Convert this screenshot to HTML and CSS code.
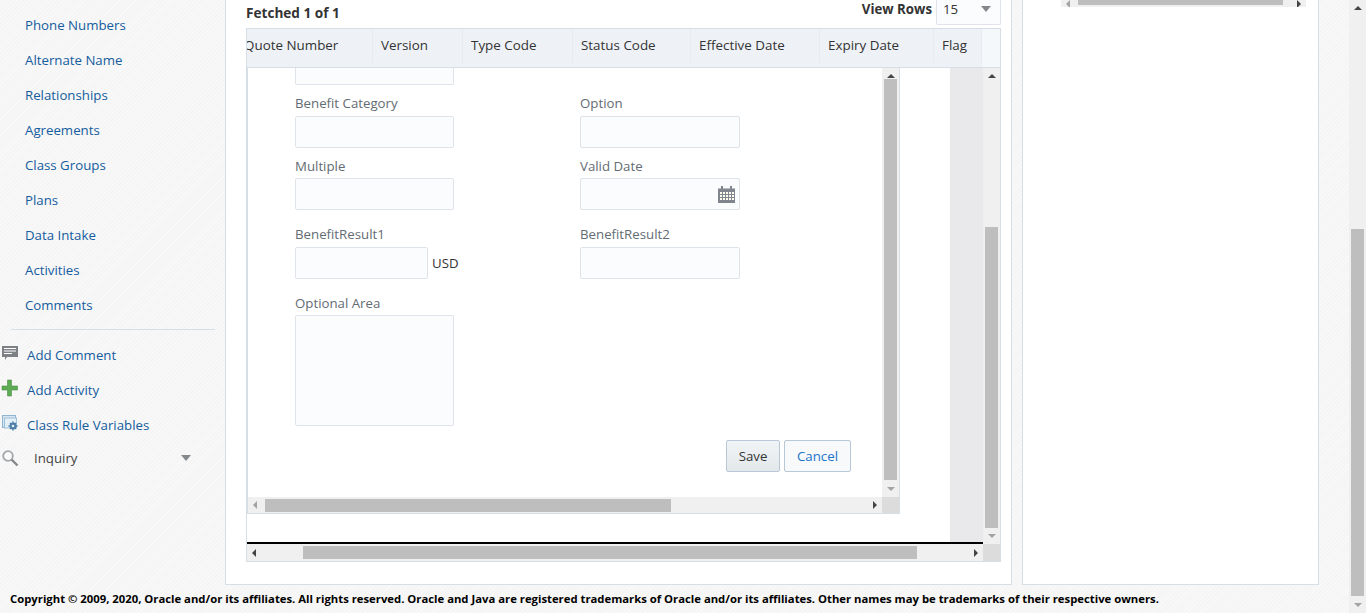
FILE: index.html
```html
<!DOCTYPE html>
<html lang="en">
<head>
    <meta charset="UTF-8">
    <title>Quote Plan</title>
    <link rel="stylesheet" href="styles.css">
</head>
<body>
<div class="page">
    <div class="columns">
        <nav class="sidebar">
            <a class="nav-link" href="#">Phone Numbers</a>
            <a class="nav-link" href="#">Alternate Name</a>
            <a class="nav-link" href="#">Relationships</a>
            <a class="nav-link" href="#">Agreements</a>
            <a class="nav-link" href="#">Class Groups</a>
            <a class="nav-link" href="#">Plans</a>
            <a class="nav-link" href="#">Data Intake</a>
            <a class="nav-link" href="#">Activities</a>
            <a class="nav-link" href="#">Comments</a>
            <div class="nav-rule"></div>
            <a class="nav-action" href="#">
                <svg class="nav-icon" width="18" height="18" viewBox="0 0 18 18"><path d="M1 2h16v11H6l-2 3v-3H1z" fill="#7d8186"/><path d="M3 4.500h12M3 7h12M3 9.500h8" stroke="#fff" stroke-width="1"/></svg>
                Add Comment
            </a>
            <a class="nav-action" href="#">
                <svg class="nav-icon" width="18" height="18" viewBox="0 0 18 18"><path d="M6.500 1h4v6h6v4h-6v6h-4v-6H1V7h5.500z" fill="#5dab55" stroke="#4a8f45" stroke-width=".6"/></svg>
                Add Activity
            </a>
            <a class="nav-action" href="#">
                <svg class="nav-icon" width="18" height="18" viewBox="0 0 18 18"><rect x="1.500" y="1.500" width="13" height="12" fill="#d5e6f1" stroke="#8fb4d0"/><rect x="3.500" y="4" width="12" height="10" fill="#e3eff7" stroke="#9dc0d9"/><path d="M12 7.500v9M7.500 12h9M9 9l6 6M15 9l-6 6" stroke="#4f7fa8" stroke-width="1.400"/><circle cx="12" cy="12" r="3.400" fill="#4f7fa8"/><circle cx="12" cy="12" r="1.300" fill="#e3eff7"/></svg>
                Class Rule Variables
            </a>
            <div class="nav-search">
                <svg class="nav-icon" width="18" height="18" viewBox="0 0 18 18"><circle cx="7" cy="7" r="4.800" fill="#fbfbfb" stroke="#a3a6a9" stroke-width="1.800"/><path d="M10.500 10.500l6 6" stroke="#85888b" stroke-width="2.400"/></svg>
                <span class="nav-search-text">Inquiry</span>
                <span class="caret-down caret-large"></span>
            </div>
        </nav>

        <main class="main-panel">
            <div class="table-bar">
                <strong class="fetched">Fetched 1 of 1</strong>
                <div class="view-rows">
                    <strong>View Rows</strong>
                    <div class="rows-select">15 <span class="caret-down caret-large"></span></div>
                </div>
            </div>
            <div class="table">
                <div class="table-head">
                    <div class="col col-quote">Quote Number</div>
                    <div class="col col-version">Version</div>
                    <div class="col col-type">Type Code</div>
                    <div class="col col-status">Status Code</div>
                    <div class="col col-effective">Effective Date</div>
                    <div class="col col-expiry">Expiry Date</div>
                    <div class="col col-flag">Flag</div>
                    <div class="col-end"></div>
                </div>
                <div class="table-body">
                    <div class="table-view">
                        <div class="frame">
                            <div class="frame-view">
                                <form class="plan-form">
                                    <div class="input input-clipped"></div>
                                    <div class="form-row row-first">
                                        <div class="field">
                                            <label>Benefit Category</label>
                                            <input class="input" type="text">
                                        </div>
                                        <div class="field field-right">
                                            <label>Option</label>
                                            <input class="input" type="text">
                                        </div>
                                    </div>
                                    <div class="form-row row-second">
                                        <div class="field">
                                            <label>Multiple</label>
                                            <input class="input" type="text">
                                        </div>
                                        <div class="field field-right">
                                            <label>Valid Date</label>
                                            <div class="input date-input">
                                                <svg width="17" height="17" viewBox="0 0 17 17"><path d="M0 2.500h17V17H0z" fill="#7f868e"/><path d="M3 0h2v3H3zM12 0h2v3h-2z" fill="#7f868e"/><path d="M2 6h2v2H2zM5 6h2v2H5zM8 6h2v2H8zM11 6h2v2h-2zM14 6h2v2h-2zM2 9h2v2H2zM5 9h2v2H5zM8 9h2v2H8zM11 9h2v2h-2zM14 9h2v2h-2zM2 12h2v2H2zM5 12h2v2H5zM8 12h2v2H8zM11 12h2v2h-2zM14 12h2v2h-2z" fill="#fdfaf0"/></svg>
                                            </div>
                                        </div>
                                    </div>
                                    <div class="form-row row-third">
                                        <div class="field">
                                            <label>BenefitResult1</label>
                                            <div class="with-unit">
                                                <input class="input input-short" type="text">
                                                <span class="unit">USD</span>
                                            </div>
                                        </div>
                                        <div class="field field-right">
                                            <label>BenefitResult2</label>
                                            <input class="input" type="text">
                                        </div>
                                    </div>
                                    <div class="form-row row-fourth">
                                        <div class="field">
                                            <label>Optional Area</label>
                                            <textarea class="input area"></textarea>
                                        </div>
                                    </div>
                                    <div class="form-buttons">
                                        <button class="btn btn-save" type="button">Save</button>
                                        <button class="btn btn-cancel" type="button">Cancel</button>
                                    </div>
                                </form>
                            </div>
                            <div class="vbar frame-vbar">
                                <span class="arrow-up"></span>
                                <div class="vthumb"></div>
                                <span class="arrow-down"></span>
                            </div>
                            <div class="hbar frame-hbar">
                                <span class="arrow-left arrow-light"></span>
                                <div class="hthumb"></div>
                                <span class="arrow-right"></span>
                            </div>
                            <div class="corner"></div>
                        </div>
                        <div class="strip"></div>
                    </div>
                    <div class="vbar table-vbar">
                        <span class="arrow-up"></span>
                        <div class="vthumb"></div>
                        <span class="arrow-down"></span>
                    </div>
                    <div class="hbar table-hbar">
                        <span class="arrow-left"></span>
                        <div class="hthumb"></div>
                        <span class="arrow-right"></span>
                    </div>
                    <div class="corner"></div>
                </div>
            </div>
        </main>

        <aside class="side-panel">
            <div class="hbar side-hbar">
                <span class="arrow-left arrow-light"></span>
                <div class="hthumb"></div>
                <span class="arrow-right"></span>
            </div>
        </aside>

        <div class="vbar page-vbar">
            <span class="arrow-up"></span>
            <div class="vthumb"></div>
            <span class="arrow-down"></span>
        </div>
    </div>
    <footer class="copyright">Copyright © 2009, 2020, Oracle and/or its affiliates. All rights reserved. Oracle and Java are registered trademarks of Oracle and/or its affiliates. Other names may be trademarks of their respective owners.</footer>
</div>
</body>
</html>
```

FILE: styles.css
```css
* {
    box-sizing: border-box;
}
html, body {
    margin: 0;
    height: 613px;
    overflow: hidden;
}
body {
    font-family: "Open Sans", "Noto Sans", sans-serif;
    font-size: 13.25px;
    color: #333;
    background: repeating-linear-gradient(135deg, #f9f9f9 0 1px, #f5f5f5 1px 3px);
}
.page {
    position: relative;
    height: 613px;
}
.columns {
    display: flex;
    height: 613px;
}

/* left nav */
.sidebar {
    width: 225px;
    flex: none;
    padding-top: 8px;
}
.nav-link {
    display: block;
    height: 35px;
    line-height: 35px;
    padding-left: 25px;
    color: #145c9e;
    text-decoration: none;
}
.nav-rule {
    height: 1px;
    margin: 6px 10px 7px 11px;
    background: #d6dfe6;
}
.nav-action {
    display: flex;
    align-items: center;
    height: 35px;
    color: #145c9e;
    text-decoration: none;
    padding-left: 1px;
}
.nav-icon {
    margin-right: 8px;
    margin-top: -4px;
}
.nav-search {
    display: flex;
    align-items: center;
    height: 31px;
    padding-left: 1px;
    color: #444;
}
.nav-search .nav-icon {
    margin-top: 0;
    margin-right: 15px;
}
.nav-search-text {
    width: 147px;
}

/* carets and arrows */
.caret-down {
    display: inline-block;
    width: 0;
    height: 0;
    border-left: 4px solid transparent;
    border-right: 4px solid transparent;
    border-top: 5px solid #85888b;
}
.caret-large {
    border-left-width: 5px;
    border-right-width: 5px;
    border-top-width: 6px;
}
.arrow-up, .arrow-down, .arrow-left, .arrow-right {
    display: block;
    flex: none;
    width: 0;
    height: 0;
    border-style: solid;
    border-color: transparent;
}
.arrow-up {
    margin: 6px auto 1px;
    border-width: 0 4px 4px;
    border-bottom-color: #444;
}
.arrow-down {
    margin: 7px auto 6px;
    border-width: 4px 4px 0;
    border-top-color: #a3a3a3;
}
.arrow-left {
    margin: 0 8px 0 5px;
    border-width: 4px 4px 4px 0;
    border-right-color: #444;
}
.arrow-left.arrow-light {
    border-right-color: #a3a3a3;
}
.arrow-right {
    margin-left: auto;
    margin-right: 5px;
    border-width: 4px 0 4px 4px;
    border-left-color: #444;
}

/* scrollbars */
.vbar {
    display: flex;
    flex-direction: column;
    background: #f0f0f0;
}
.vthumb {
    flex: 1;
    width: 13px;
    margin: 0 auto;
    background: #bebebe;
}
.hbar {
    display: flex;
    align-items: center;
    background: #f0f0f0;
}
.hthumb {
    height: 13px;
    background: #bebebe;
}
.corner {
    background: #dcdcdc;
}

/* main panel */
.main-panel {
    width: 787px;
    height: 585px;
    flex: none;
    padding: 0 10px 0 21px;
    background: #fff;
    border-left: 1px solid #d6dfe6;
    border-right: 1px solid #d6dfe6;
    border-bottom: 1px solid #d6dfe6;
}
.table-bar {
    display: flex;
    justify-content: space-between;
    height: 28px;
    margin-left: -1px;
}
.fetched {
    line-height: 25px;
    font-size: 13.6px;
}
.view-rows {
    display: flex;
    align-items: flex-start;
    gap: 4px;
    line-height: 18px;
}
.rows-select {
    display: flex;
    justify-content: space-between;
    align-items: center;
    width: 65px;
    height: 25px;
    padding: 0 9px 7px 6px;
    background: #fbfcfe;
    border: 1px solid #dfe4ea;
    border-top: 0;
    border-radius: 0 0 2px 2px;
}
.table {
    width: 755px;
    height: 534px;
    margin-left: -1px;
    border: 1px solid #d6dfe6;
}
.table-head {
    display: flex;
    height: 39px;
    overflow: hidden;
    background: #eef2f7;
    border-bottom: 1px solid #d6dfe6;
}
.col {
    flex: none;
    height: 34px;
    padding-left: 8px;
    border-right: 1px solid #e6ebf0;
    white-space: nowrap;
    overflow: hidden;
    font-size: 13.4px;
    line-height: 33px;
}
.col-quote { width: 126px; padding-left: 0; text-indent: -3px; }
.col-version { width: 90px; }
.col-type { width: 110px; }
.col-status { width: 118px; }
.col-effective { width: 129px; }
.col-expiry { width: 114px; }
.col-flag { width: 48px; }
.col-end {
    flex: 1;
    background: #f5f8fb;
}
.table-body {
    display: grid;
    grid-template-columns: 736px 17px;
    grid-template-rows: 476px 17px;
}
.table-view {
    display: flex;
    align-items: flex-start;
    border-bottom: 2px solid #000;
}
.frame {
    display: grid;
    grid-template-columns: 634px 17px;
    grid-template-rows: 429px 16px;
    width: 653px;
    height: 446px;
    flex: none;
    border-left: 1px solid #d6dfe6;
    border-right: 1px solid #d6dfe6;
    border-bottom: 1px solid #d6dfe6;
}
.strip {
    width: 33px;
    height: 100%;
    margin-left: 50px;
    flex: none;
    background: #e9e9eb;
}
.frame-view {
    overflow: hidden;
    background: #fff;
}
.frame-hbar .hthumb {
    width: 406px;
}
.table-vbar .arrow-up {
    margin-bottom: 0;
}
.table-vbar .vthumb {
    flex: none;
    height: 301px;
    margin-top: 149px;
}
.table-vbar .arrow-down {
    margin-top: 6px;
}
.table-hbar .hthumb {
    width: 614px;
    margin-left: 39px;
}

/* form */
.plan-form {
    padding-left: 47px;
}
.input {
    display: block;
    width: 159px;
    height: 32px;
    padding: 0;
    background: #fbfcfe;
    border: 1px solid #dfe4ea;
    border-radius: 2px;
    font-family: inherit;
}
.input-clipped {
    height: 17px;
    border-top: 0;
    border-radius: 0 0 2px 2px;
}
.form-row {
    display: flex;
}
.row-first { margin-top: 8px; }
.row-second { margin-top: 8px; }
.row-third { margin-top: 14px; }
.row-fourth { margin-top: 14px; }
.field {
    width: 285px;
    flex: none;
}
.field label {
    display: block;
    height: 22px;
    line-height: 20px;
    color: #636b73;
}
.row-first .field label,
.row-third .field label {
    height: 23px;
}
.field-right .input {
    width: 160px;
}
.date-input {
    display: flex;
    align-items: center;
    justify-content: flex-end;
    padding-right: 4px;
}
.with-unit {
    display: flex;
    align-items: center;
}
.input-short {
    width: 133px;
}
.unit {
    margin-left: 4px;
}
.area {
    height: 111px;
    resize: none;
}
.form-buttons {
    display: flex;
    justify-content: flex-end;
    gap: 4px;
    margin-top: 14px;
    margin-right: 31px;
}
.btn {
    height: 32px;
    padding: 0;
    font-family: inherit;
    font-size: 13.25px;
    border: 1px solid #b9c8d6;
    border-radius: 2px;
}
.btn-save {
    width: 54px;
    color: #333;
    background: linear-gradient(#f1f4f6, #e3e8eb);
}
.btn-cancel {
    width: 67px;
    color: #1a73c9;
    background: #f7f9fb;
}

/* right panel */
.side-panel {
    width: 297px;
    height: 585px;
    flex: none;
    margin-left: 10px;
    padding: 0 12px 0 38px;
    background: #fff;
    border-left: 1px solid #d6dfe6;
    border-right: 1px solid #d6dfe6;
    border-bottom: 1px solid #d6dfe6;
}
.side-hbar {
    height: 7px;
    overflow: hidden;
}
.side-hbar .hthumb {
    width: 205px;
    height: 5px;
    align-self: flex-start;
}
.page-vbar {
    width: 17px;
    margin-left: auto;
    flex: none;
}
.page-vbar .arrow-up {
    margin-bottom: 0;
}
.page-vbar .vthumb {
    flex: none;
    height: 367px;
    margin-top: 219px;
}

/* footer sits over the page scroll area */
.copyright {
    position: absolute;
    left: 10px;
    top: 590px;
    font-size: 11.3px;
    font-weight: 700;
    line-height: 18px;
    color: #000;
    white-space: nowrap;
}
```
